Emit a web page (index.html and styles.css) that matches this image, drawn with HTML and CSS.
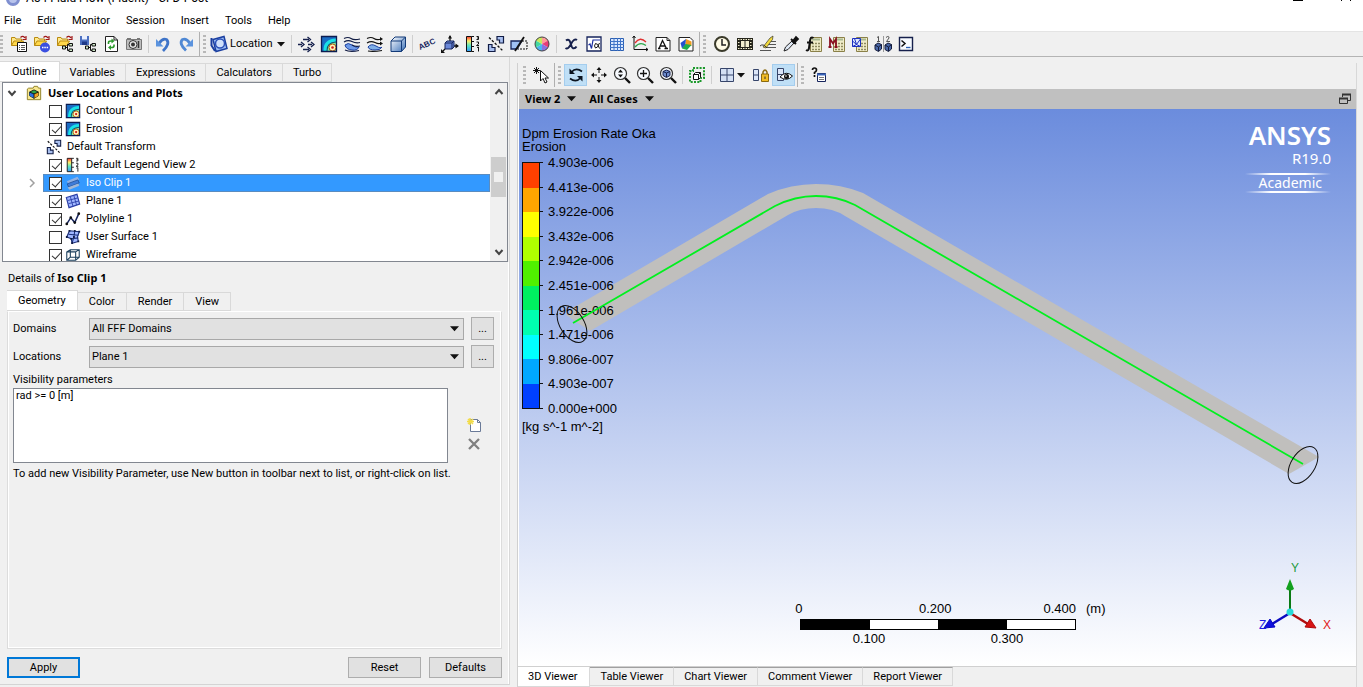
FILE: index.html
```html
<!DOCTYPE html>
<html lang="en">
<head>
<meta charset="utf-8">
<title>A54 Fluid Flow (Fluent) - CFD-Post</title>
<link rel="stylesheet" href="styles.css">
</head>
<body>
<svg class="defs" aria-hidden="true">
  <defs>
    <linearGradient id="rainbow" x1="0" y1="0" x2="0" y2="1">
      <stop offset="0" stop-color="#f33"/><stop offset=".3" stop-color="#fe6"/><stop offset=".6" stop-color="#5ee6c0"/><stop offset="1" stop-color="#39f"/>
    </linearGradient>
    <linearGradient id="glass" x1="0" y1="0" x2="1" y2="1">
      <stop offset="0" stop-color="#fff"/><stop offset="1" stop-color="#3a70b8"/>
    </linearGradient>
    <symbol id="folder" viewBox="0 0 18 18">
      <path d="M1.500 10.500V2.500H5L6 4H11.500V6" fill="#ffe98a" stroke="#b98a10"/>
      <path d="M1.500 10.500L4 6H13.500L11 10.500Z" fill="#ffd84a" stroke="#b98a10"/>
      <path d="M10.500 2.500Q13 0 15 3M16 1V4.500H12.500" fill="none" stroke="#a01818" stroke-width="1.200"/>
    </symbol>
    <symbol id="tree-nodes" viewBox="0 0 18 18">
      <path d="M9 12.500H11.500M11.500 9.500V15.500M11.500 9.500H14M11.500 15.500H14" fill="none" stroke="#111"/>
      <path d="M6.500 11H9.500V14H6.500ZM13 8.500H16.500V11H13ZM13 14H16.500V16.500H13Z" fill="#cfe8c8" stroke="#111"/>
    </symbol>
    <symbol id="i-load-results" viewBox="0 0 18 18"><use href="#folder"/><path d="M7.500 7.500H16.500V16.500H7.500Z" fill="#fff" stroke="#111"/><path d="M9 10.500H10M11 10.500H15M9 12.500H10M11 12.500H15M9 14.500H10M11 14.500H15" stroke="#555"/></symbol>
    <symbol id="i-load-state" viewBox="0 0 18 18"><use href="#folder"/><circle cx="12" cy="12.500" r="5" fill="#3a4fe0"/><path d="M9 12.500h1.500M11.300 12.500h1.500M13.600 12.500h1.500" stroke="#fff" stroke-width="1.500"/></symbol>
    <symbol id="i-open" viewBox="0 0 18 18"><use href="#folder"/><use href="#tree-nodes"/></symbol>
    <symbol id="i-save" viewBox="0 0 18 18"><path d="M1 1H10V10H1Z" fill="#4b6fc0"/><path d="M3 1H8V4.500H3Z" fill="#e9f0ff"/><path d="M3 6.500H8V10H3Z" fill="#203a88"/><use href="#tree-nodes"/></symbol>
    <symbol id="i-refresh" viewBox="0 0 18 18"><path d="M3.500 1.500H12L15.500 5V16.500H3.500Z" fill="#fff" stroke="#222"/><path d="M12 1.500V5H15.500" fill="none" stroke="#222"/><path d="M6.500 9V7.500Q6.500 6 9 6H10M12 9.500V11Q12 12.500 9.500 12.500H8.500" fill="none" stroke="#2c9a2c" stroke-width="1.600"/><path d="M9.500 3.500L12.500 6L9.500 8.500ZM9 10L6 12.500L9 15Z" fill="#2c9a2c"/></symbol>
    <symbol id="i-camera" viewBox="0 0 18 18"><path d="M1.500 4.500H16.500V14.500H1.500Z" fill="#bdbdbd" stroke="#777"/><path d="M2 3H6V5H2ZM12 3H15V5H12Z" fill="#777"/><circle cx="8" cy="9.500" r="4" fill="#e6e6e6" stroke="#333"/><circle cx="8" cy="9.500" r="2" fill="#333"/><path d="M13.500 6V13" stroke="#333" stroke-width="1.500"/></symbol>
    <symbol id="i-undo" viewBox="0 0 18 18"><path d="M5 8.500Q8.500 3 12.500 4.500Q16.500 8.500 9 16" fill="none" stroke="#3f74c8" stroke-width="2.800"/><path d="M2 4V11.500H9.500Z" fill="#5b93de"/></symbol>
    <symbol id="i-redo" viewBox="0 0 18 18"><path d="M13 8.500Q9.500 3 5.500 4.500Q1.500 8.500 9 15.500" fill="none" stroke="#4f88d4" stroke-width="2.800"/><path d="M16 4V11.500H8.500Z" fill="#5b93de"/></symbol>
    <symbol id="i-location" viewBox="0 0 18 18"><path d="M3 4.500L14 1.500L17 13.500L6 16.500Z" fill="#9fc0f4" stroke="#1b3fa0" stroke-width="1.500"/><path d="M1.500 3V10.500L5 16" fill="none" stroke="#1b3fa0" stroke-width="2"/><circle cx="10" cy="8.500" r="4.500" fill="#cfe0fb" stroke="#2b50b8" stroke-width="1.500"/></symbol>
    <symbol id="i-vector" viewBox="0 0 18 18"><path d="M6 4.500H12M1 9.500H5M11 9.500H15M6 14.500H12" stroke="#16204c" stroke-width="1.500"/><path d="M10.500 2L13.500 4.500L10.500 7M4 7L7 9.500L4 12M14 7L17 9.500L14 12M10.500 12L13.500 14.500L10.500 17" fill="none" stroke="#16204c" stroke-width="1.300"/></symbol>
    <symbol id="i-contour" viewBox="0 0 18 18"><path d="M2 2H16V16H2Z" fill="#1a6cc4"/><path d="M3.500 16Q3 4 16 3.500V16Z" fill="#19e0e6"/><path d="M6.500 16Q6 7 16 6.500V16Z" fill="#14506e"/><path d="M7.500 16Q7 8 16 7.500V16Z" fill="#7be8a0"/><circle cx="12.500" cy="12.500" r="3.500" fill="#fff4b8" stroke="#b05a10"/><circle cx="12.500" cy="12.500" r="1.300" fill="#d01818"/><path d="M1.500 1.500H16.500V16.500H1.500Z" fill="none" stroke="#0c1c50" stroke-width="1.300"/></symbol>
    <symbol id="i-stream" viewBox="0 0 18 18"><path d="M2 10Q5 7 9 10T16 12Q14 16 9 15Q3 14.500 2 10Z" fill="#6f9be8" stroke="#1b3fa0"/><path d="M1 3.500Q5 1.500 8 3.500T17 4M1 7Q5 4.500 9 6.500T17 7.500M9 10Q12 12 17 11M2 15Q7 17.500 16 15.500" fill="none" stroke="#111c44" stroke-width="1.200"/></symbol>
    <symbol id="i-track" viewBox="0 0 18 18"><path d="M2 12Q5 8 10 11T16 12Q14 15.500 9 15Q3 15 2 12Z" fill="#7fb0e8" stroke="#1b3fa0"/><path d="M1 3.500Q5 1.500 8 3.500T15 4M1 8Q5 5.500 9 7.500T15 8M2 16Q7 17 16 15.500" fill="none" stroke="#111" stroke-width="1.200"/><path d="M14 2L17 4L14 6ZM14 6.500L17 8.500L14 10.500Z" fill="#111"/></symbol>
    <symbol id="i-volume" viewBox="0 0 18 18"><path d="M2 6L6 2H16.500V12L12.500 16.500H2Z" fill="url(#glass)" stroke="#123a78"/><path d="M2 6H12.500V16.500M12.500 6L16.500 2" fill="none" stroke="#123a78"/></symbol>
    <symbol id="i-axes" viewBox="0 0 18 18"><path d="M9 1V6M13 11H17M4 14L1 17" stroke="#111" stroke-width="1.300"/><path d="M7 3.500L9 0L11 3.500ZM14.500 8.500L18 11L14.500 13.500ZM0 14V18H4Z" fill="#111"/><path d="M4 8L6 6H13V12L11 14H4Z" fill="#6b88d8" stroke="#16245c"/><path d="M4 8H11V14M11 8L13 6" fill="none" stroke="#16245c"/></symbol>
    <symbol id="i-legend" viewBox="0 0 18 18"><path d="M2.500 1.500H7.500V16.500H2.500Z" fill="url(#rainbow)" stroke="#111"/><path d="M7.500 1.500H10M7.500 6.500H10M7.500 11.500H10M7.500 16.500H10" stroke="#111"/><path d="M12.500 1.500H14.500V4.500H12.500M14.500 3H13M12.500 7H14.500V9L12.500 10.500H15M13 12.500L14.500 12V16.500" fill="none" stroke="#111"/></symbol>
    <symbol id="i-transform" viewBox="0 0 18 18"><path d="M10 1.500H16.500V8H12.500V5H10ZM1.500 9.500H5V12.500H8V16.500H1.500Z" fill="#a9c0f0" stroke="#111c44" stroke-width="1.200"/><path d="M2 2.500L16 16" stroke="#111" stroke-width="1.300" stroke-dasharray="2.500 1.500"/></symbol>
    <symbol id="i-clip" viewBox="0 0 18 18"><path d="M1 6H12L7 14H1Z" fill="#9fc0f4" stroke="#16245c" stroke-width="1.300"/><path d="M12 6H17V14H8" fill="none" stroke="#111" stroke-dasharray="2 1"/><path d="M14 2L5 16" stroke="#111" stroke-width="1.800"/></symbol>
    <symbol id="i-wheel" viewBox="0 0 18 18"><path d="M9 9V2A7 7 0 0 1 15 5.500Z" fill="#ff9a9a"/><path d="M9 9L15 5.500A7 7 0 0 1 15 12.500Z" fill="#e83c78"/><path d="M9 9L15 12.500A7 7 0 0 1 9 16Z" fill="#8b6fe0"/><path d="M9 9V16A7 7 0 0 1 3 12.500Z" fill="#4bb4f0"/><path d="M9 9L3 12.500A7 7 0 0 1 3 5.500Z" fill="#42d8a0"/><path d="M9 9L3 5.500A7 7 0 0 1 9 2Z" fill="#c8e85a"/><circle cx="9" cy="9" r="7" fill="none" stroke="#444"/></symbol>
    <symbol id="i-var" viewBox="0 0 18 18"><path d="M4 5.500Q7 3 8.500 8T10.500 13Q13 14 14.500 11.500M15 5Q12 3 9 9T3.500 13" fill="none" stroke="#16204c" stroke-width="2"/></symbol>
    <symbol id="i-expr" viewBox="0 0 18 18"><path d="M2 2H16V16H2Z" fill="#fff" stroke="#16245c" stroke-width="1.300"/><path d="M3.500 10L5 9L6.500 13.500L8 5H15" fill="none" stroke="#1b2fa0" stroke-width="1.200"/><path d="M14.500 8Q12.500 13.500 10.500 13Q8.500 11 10.500 8.500Q13 8 14.500 13.500" fill="none" stroke="#111"/></symbol>
    <symbol id="i-table" viewBox="0 0 18 18"><path d="M2.500 3.500H15.500V15.500H2.500Z" fill="#d9e8ff" stroke="#2c5fb0"/><path d="M2 6.500H16M2 9.500H16M2 12.500H16M6 3V16M9.500 3V16M12.500 3V16" stroke="#3f74c8"/></symbol>
    <symbol id="i-chart" viewBox="0 0 18 18"><path d="M3 1V14.500H17M1.500 3L3 1L4.500 3M15 13L17 14.500L15 16" fill="none" stroke="#111"/><path d="M4 8Q9 1 15 7" fill="none" stroke="#e03030" stroke-width="1.300"/><path d="M4 12Q9 6 15 10.500" fill="none" stroke="#2ca84c" stroke-width="1.300"/></symbol>
    <symbol id="i-comment" viewBox="0 0 18 18"><path d="M2 2.500H13L16 5.500V16H2Z" fill="#fff" stroke="#222"/><path d="M13 2.500V5.500H16" fill="none" stroke="#222"/><path d="M5 13.500L8.500 5.500L12.500 13.500M6.500 11H11M4 13.500H6.500M10.500 13.500H14" fill="none" stroke="#111" stroke-width="1.300"/></symbol>
    <symbol id="i-figure" viewBox="0 0 18 18"><path d="M2 2.500H13L16 5.500V16H2Z" fill="#fff" stroke="#222"/><path d="M3.500 8L9 4L8.500 10L5 13.500Z" fill="#2450d0"/><path d="M9 4L14.500 6.500V11L8.500 10Z" fill="#f09a1e"/><path d="M5 13.500L8.500 9L14.500 10L10 15Z" fill="#1fae4c"/></symbol>
    <symbol id="i-clock" viewBox="0 0 18 18"><circle cx="9" cy="9" r="7" fill="#fffbe6" stroke="#3a3a2a" stroke-width="2"/><path d="M9 4V10H13" fill="none" stroke="#222" stroke-width="1.500"/></symbol>
    <symbol id="i-film" viewBox="0 0 18 18"><path d="M1 3H17V15H1Z" fill="#26261c"/><path d="M5 6H8.500V12H5ZM9.500 6H13V12H9.500Z" fill="#f4f0d0"/><path d="M2 4.500H17M2 13.500H17M2 7.500H4M2 10.500H4M14 7.500H16M14 10.500H16" stroke="#f4f0d0" stroke-dasharray="1.500 1"/></symbol>
    <symbol id="i-quick" viewBox="0 0 18 18"><path d="M9 6.500H17M8 9.500H17M8 12.500H17M1 15.500H12" stroke="#555"/><path d="M4 12L11 3L14 1L13.500 4.500L7 13Z" fill="#f0d83c" stroke="#3a3a2a" stroke-width=".7"/><path d="M1 11Q4 8 8 13" fill="none" stroke="#333"/></symbol>
    <symbol id="i-probe" viewBox="0 0 18 18"><path d="M2 16L3.500 12L10 6L12 8L6 14.500Z" fill="#dfe8f4" stroke="#222"/><path d="M9 4L14 9M10.500 6.500L14 2L16 4L12 8Z" fill="#111" stroke="#111" stroke-width="1.800"/></symbol>
    <symbol id="calc" viewBox="0 0 18 18"><path d="M5.500 2.500H16.500V16.500H5.500Z" fill="#f0ecc8" stroke="#8a8048"/><path d="M7 4.500H15" stroke="#a8b890" stroke-width="2"/><path d="M7 8.500H15.500M7 11.500H15.500M7 14.500H15.500" stroke="#8e8a60" stroke-width="1.500" stroke-dasharray="2 1"/></symbol>
    <symbol id="i-func" viewBox="0 0 18 18"><use href="#calc"/><path d="M8.500 3Q5.500 1 5 6L4 13Q3.500 16.500 1 15M2 7.500H8" fill="none" stroke="#111" stroke-width="2"/></symbol>
    <symbol id="i-macro" viewBox="0 0 18 18"><use href="#calc"/><path d="M2 12V4L5 8.500L8 4V12M.5 12H3.500M6.500 12H9.500" fill="none" stroke="#8a1020" stroke-width="1.800"/></symbol>
    <symbol id="i-mesh" viewBox="0 0 18 18"><use href="#calc"/><path d="M1.500 3.500H9.500V11.500H1.500Z" fill="#dfe8ff" stroke="#1b2fc0"/><path d="M1.500 6L5.500 9.500L9.500 4M1.500 11.500L5.500 9.500L9.500 11.500M3.500 3.500L5.500 9.500" fill="none" stroke="#1b2fc0"/></symbol>
    <symbol id="i-compare" viewBox="0 0 18 18"><path d="M3 2.500L4.500 1.500V6.500M3 6.500H6M12 2.500Q15 0 15 3L12.500 6.500H16" fill="none" stroke="#555"/><path d="M9.500 1V17" stroke="#999"/><path d="M1 10L4 8L7.500 9.500V14L4.500 16.500L1 14.500ZM11 10L14 8L17.500 9.500V14L14.500 16.500L11 14.500Z" fill="#4a68a8" stroke="#141c3c"/><path d="M1 10L4.500 12L7.500 9.500M4.500 12V16M11 10L14.500 12L17.500 9.500M14.500 12V16" fill="none" stroke="#141c3c"/></symbol>
    <symbol id="i-command" viewBox="0 0 18 18"><path d="M2.500 2.500H15.500V15.500H2.500Z" fill="#f8fbff" stroke="#16204c" stroke-width="1.400"/><path d="M4.500 5.500L8 8.500L4.500 11.500" fill="none" stroke="#111" stroke-width="1.500"/><path d="M9 12.500H13.500" stroke="#2c5fb0" stroke-width="1.300"/></symbol>
    <symbol id="i-select" viewBox="0 0 18 18"><path d="M4.500 1V8M1 4.500H8M2 2L7 7M7 2L2 7" stroke="#111"/><path d="M8.500 4.500V15L11 12.500L13 17L15 16L13 12H16.500Z" fill="#fff" stroke="#111"/></symbol>
    <symbol id="i-rotate" viewBox="0 0 18 18"><path d="M4.500 6Q9 1 15 5.500M13.500 12Q9 17 3 12.500" fill="none" stroke="#0b1420" stroke-width="1.800"/><path d="M2.500 2.500V8H8ZM15.500 10V15.500L10 10Z" fill="#0b1420"/></symbol>
    <symbol id="i-pan" viewBox="0 0 18 18"><path d="M9 2V7M9 11V16M2 9H7M11 9H16" stroke="#111"/><path d="M6.500 4L9 1L11.500 4ZM6.500 14L9 17L11.500 14ZM4 6.500L1 9L4 11.500ZM14 6.500L17 9L14 11.500Z" fill="#111"/></symbol>
    <symbol id="lens" viewBox="0 0 18 18"><circle cx="7.500" cy="7.500" r="6" fill="#f8fbff" stroke="#333" stroke-width="1.200"/><path d="M12 12L17 17" stroke="#111" stroke-width="2.400"/></symbol>
    <symbol id="i-zoom" viewBox="0 0 18 18"><use href="#lens"/><path d="M5 6.500L7.500 3.500L10 6.500ZM5 8.500L7.500 11.500L10 8.500Z" fill="#111"/></symbol>
    <symbol id="i-zoom-box" viewBox="0 0 18 18"><use href="#lens"/><path d="M4 7.500H11M7.500 4V11" stroke="#111" stroke-width="1.300"/></symbol>
    <symbol id="i-fit" viewBox="0 0 18 18"><use href="#lens"/><path d="M4 5.500L7.500 4L11 5.500V9.500L7.500 11.500L4 9.500Z" fill="#6f8ed0" stroke="#16204c"/><path d="M4 5.500L7.500 7L11 5.500M7.500 7V11" fill="none" stroke="#16204c"/></symbol>
    <symbol id="i-highlight" viewBox="0 0 18 18"><path d="M5 2H16V12H12.500V16H2V5H5Z" fill="none" stroke="#1c9a2c" stroke-width="2" stroke-dasharray="2 1.300"/><path d="M5.500 8.500L7.500 6.500H12.500V11.500L10.500 13.500H5.500ZM5.500 8.500H10.500V13.500M10.500 8.500L12.500 6.500" fill="#fff" stroke="#111"/></symbol>
    <symbol id="i-views" viewBox="0 0 18 18"><path d="M2.500 2.500H15.500V15.500H2.500Z" fill="#d4e0f4" stroke="#36456a"/><path d="M2 9H16M9 2V16" stroke="#36456a"/></symbol>
    <symbol id="i-lock" viewBox="0 0 18 18"><path d="M1.500 3.500H6.500V14.500H1.500ZM1.500 9H6.500" fill="#dce6f8" stroke="#36456a"/><path d="M11 8V6Q13 2 15 6V8" fill="none" stroke="#8a6a10" stroke-width="1.500"/><path d="M9.500 8H16.500V15.500H9.500Z" fill="#f2bc24" stroke="#8a6a10"/><path d="M13 10.500V13" stroke="#333"/></symbol>
    <symbol id="i-eye" viewBox="0 0 18 18"><path d="M2.500 2.500H8.500V14.500H2.500ZM2.500 8.500H8.500" fill="#dce6f8" stroke="#36456a"/><path d="M5 11Q11 4 17.500 10Q12 16 5 11Z" fill="#fff" stroke="#111"/><circle cx="11.500" cy="10.500" r="2.500" fill="#111"/><circle cx="11" cy="10" r=".8" fill="#fff"/></symbol>
    <symbol id="i-help" viewBox="0 0 18 18"><path d="M2.500 4Q2.500 2 4.500 2T6.500 4Q6.500 5.500 4.500 6.500V8M4.500 9V11" fill="none" stroke="#111" stroke-width="1.700"/><path d="M7.500 7.500H15.500V15.500H7.500Z" fill="#fff" stroke="#16245c"/><path d="M7 8.500H16" stroke="#3a64b8" stroke-width="2"/><path d="M9 11.500H14M9 13.500H14" stroke="#777"/></symbol>
    <symbol id="i-group" viewBox="0 0 18 18"><path d="M1.500 4.500V16.500H16.500V3.500H14L13 1.500H9L8 3.500H3Z" fill="#f8e890" stroke="#8a7a20"/><path d="M4 8L9 5.500L14 8V12L9 15L4 12Z" fill="#2ca84c" stroke="#111"/><path d="M4 8L9 10V15L4 12Z" fill="#2a6fe0"/><path d="M9 10L14 8V12L9 15Z" fill="#f0a01e"/><path d="M4 8L9 10L14 8M9 10V15" fill="none" stroke="#111"/></symbol>
    <symbol id="i-iso" viewBox="0 0 18 18"><path d="M2 7L14 2L16 5L4 10Z" fill="#8fb0e4"/><path d="M2.500 10L14.500 5.500L16 9L4 13.500Z" fill="#3f7cd8" stroke="#24539c"/><path d="M3 14L15 9.500L16 12L5 16.500Z" fill="#a4b8d4"/></symbol>
    <symbol id="i-plane" viewBox="0 0 18 18"><path d="M1.500 5L13.500 1.500L16.500 12.500L4.500 16.500Z" fill="#9fb6ff" stroke="#2b3fa8" stroke-width="1.300"/><path d="M6 4L9 15M10 3L13 13.500M3 8.500L14.500 5.500M4 12L15.500 9" stroke="#2b3fa8"/></symbol>
    <symbol id="i-polyline" viewBox="0 0 18 18"><path d="M2 14.500L6.500 7.500L11 13L15.500 3" fill="none" stroke="#16245c" stroke-width="1.700"/><circle cx="2" cy="14.500" r="1.500" fill="#111"/><circle cx="6.500" cy="7.500" r="1.500" fill="#111"/><circle cx="11" cy="13" r="1.500" fill="#111"/><circle cx="15.500" cy="3" r="1.500" fill="#111"/></symbol>
    <symbol id="i-surface" viewBox="0 0 18 18"><path d="M5 2L16 3L14 9L15 14L8 16L7 11L2 9Z" fill="#9fb6ff" stroke="#1b2f78" stroke-width="1.300"/><path d="M11 2L10 9L8 16M4 6L15 7M7 11L15 10" fill="none" stroke="#1b2f78" stroke-width="1.200"/><path d="M4 1H6V3H4ZM10 1H12V3H10ZM15 2H17V4H15ZM1 8H3V10H1ZM6 10H8V12H6ZM7 15H9V17H7ZM14 13H16V15H14ZM9 8H11V10H9Z" fill="#111c44"/></symbol>
    <symbol id="i-wire" viewBox="0 0 18 18"><path d="M2 5.500L6 3H16V11.500L12 15H2ZM2 5.500H12V15M12 5.500L16 3M6 3V11.500H16M6 11.500L2 15" fill="none" stroke="#1b3f5c" stroke-width="1.200"/></symbol>
    <symbol id="arrow" viewBox="0 0 10 6"><path d="M0 0H10L5 5.500Z" fill="#111"/></symbol>
    <symbol id="up" viewBox="0 0 10 10"><path d="M1.500 7L5 3L8.500 7" fill="none" stroke="#444" stroke-width="2"/></symbol>
    <symbol id="down" viewBox="0 0 10 10"><path d="M1.500 3L5 7L8.500 3" fill="none" stroke="#444" stroke-width="2"/></symbol>
  </defs>
</svg>

<div class="app">
  <header class="titlebar">
    <svg class="app-icon" viewBox="0 0 14 14"><circle cx="7" cy="7" r="7" fill="#7f8fd0"/><circle cx="7" cy="7" r="4" fill="#b9c4ec"/></svg>
    <span class="title-text">A54 Fluid Flow (Fluent) - CFD-Post</span>
    <span class="window-controls"><i class="minimize"></i><i class="close"></i></span>
  </header>

  <nav class="menubar">
    <button>File</button><button>Edit</button><button>Monitor</button><button>Session</button><button>Insert</button><button>Tools</button><button>Help</button>
  </nav>

  <div class="toolbar main-toolbar">
    <span class="grip"></span>
    <button class="tool" aria-label="Load results"><svg><use href="#i-load-results"/></svg></button>
    <button class="tool" aria-label="Load state"><svg><use href="#i-load-state"/></svg></button>
    <button class="tool" aria-label="Open"><svg><use href="#i-open"/></svg></button>
    <button class="tool" aria-label="Save state"><svg><use href="#i-save"/></svg></button>
    <button class="tool" aria-label="Refresh"><svg><use href="#i-refresh"/></svg></button>
    <button class="tool" aria-label="Save picture"><svg><use href="#i-camera"/></svg></button>
    <span class="sep"></span>
    <button class="tool" aria-label="Undo"><svg><use href="#i-undo"/></svg></button>
    <button class="tool" aria-label="Redo"><svg><use href="#i-redo"/></svg></button>
    <span class="sep edge"></span><span class="grip"></span>
    <button class="tool location"><svg><use href="#i-location"/></svg>Location<svg class="arrow"><use href="#arrow"/></svg></button>
    <span class="sep"></span>
    <button class="tool" aria-label="Vector"><svg><use href="#i-vector"/></svg></button>
    <button class="tool" aria-label="Contour"><svg><use href="#i-contour"/></svg></button>
    <button class="tool" aria-label="Streamline"><svg><use href="#i-stream"/></svg></button>
    <button class="tool" aria-label="Particle track"><svg><use href="#i-track"/></svg></button>
    <button class="tool" aria-label="Volume rendering"><svg><use href="#i-volume"/></svg></button>
    <span class="sep"></span>
    <button class="tool" aria-label="Text"><svg viewBox="0 0 18 18"><text x="1" y="14" class="abc" transform="rotate(-24 4 12)">ABC</text></svg></button>
    <button class="tool" aria-label="Coordinate frame"><svg><use href="#i-axes"/></svg></button>
    <button class="tool" aria-label="Legend"><svg><use href="#i-legend"/></svg></button>
    <button class="tool" aria-label="Instance transform"><svg><use href="#i-transform"/></svg></button>
    <button class="tool" aria-label="Clip plane"><svg><use href="#i-clip"/></svg></button>
    <button class="tool" aria-label="Color map"><svg><use href="#i-wheel"/></svg></button>
    <span class="sep"></span>
    <button class="tool" aria-label="Variable"><svg><use href="#i-var"/></svg></button>
    <button class="tool" aria-label="Expression"><svg><use href="#i-expr"/></svg></button>
    <button class="tool" aria-label="Table"><svg><use href="#i-table"/></svg></button>
    <button class="tool" aria-label="Chart"><svg><use href="#i-chart"/></svg></button>
    <button class="tool" aria-label="Comment"><svg><use href="#i-comment"/></svg></button>
    <button class="tool" aria-label="Figure"><svg><use href="#i-figure"/></svg></button>
    <span class="sep edge"></span><span class="grip"></span>
    <button class="tool" aria-label="Timestep selector"><svg><use href="#i-clock"/></svg></button>
    <button class="tool" aria-label="Animation"><svg><use href="#i-film"/></svg></button>
    <button class="tool" aria-label="Quick editor"><svg><use href="#i-quick"/></svg></button>
    <button class="tool" aria-label="Probe"><svg><use href="#i-probe"/></svg></button>
    <button class="tool" aria-label="Function calculator"><svg><use href="#i-func"/></svg></button>
    <button class="tool" aria-label="Macro calculator"><svg><use href="#i-macro"/></svg></button>
    <button class="tool" aria-label="Mesh calculator"><svg><use href="#i-mesh"/></svg></button>
    <button class="tool" aria-label="Case comparison"><svg><use href="#i-compare"/></svg></button>
    <button class="tool" aria-label="Command editor"><svg><use href="#i-command"/></svg></button>
  </div>

  <main class="workspace">
    <section class="left">
      <div class="tabs outline-tabs" role="tablist">
        <button class="tab active" role="tab">Outline</button><button class="tab" role="tab">Variables</button><button class="tab" role="tab">Expressions</button><button class="tab" role="tab">Calculators</button><button class="tab" role="tab">Turbo</button>
      </div>
      <div class="tree-box">
        <ul class="tree">
          <li class="row root"><svg class="chev"><use href="#down"/></svg><svg class="ico"><use href="#i-group"/></svg><b>User Locations and Plots</b></li>
          <li class="row"><label><input type="checkbox"><svg class="ico"><use href="#i-contour"/></svg>Contour 1</label></li>
          <li class="row"><label><input type="checkbox" checked><svg class="ico"><use href="#i-contour"/></svg>Erosion</label></li>
          <li class="row"><span class="plain"><svg class="ico"><use href="#i-transform"/></svg>Default Transform</span></li>
          <li class="row"><label><input type="checkbox" checked><svg class="ico"><use href="#i-legend"/></svg>Default Legend View 2</label></li>
          <li class="row selected"><svg class="expander" viewBox="0 0 10 10"><path d="M3 1L7 5L3 9" fill="none" stroke="#a0a0a0" stroke-width="1.500"/></svg><label><input type="checkbox" checked><svg class="ico"><use href="#i-iso"/></svg>Iso Clip 1</label></li>
          <li class="row"><label><input type="checkbox" checked><svg class="ico"><use href="#i-plane"/></svg>Plane 1</label></li>
          <li class="row"><label><input type="checkbox" checked><svg class="ico"><use href="#i-polyline"/></svg>Polyline 1</label></li>
          <li class="row"><label><input type="checkbox"><svg class="ico"><use href="#i-surface"/></svg>User Surface 1</label></li>
          <li class="row"><label><input type="checkbox" checked><svg class="ico"><use href="#i-wire"/></svg>Wireframe</label></li>
        </ul>
        <div class="scrollbar"><svg><use href="#up"/></svg><div class="thumb"></div><svg><use href="#down"/></svg></div>
      </div>

      <div class="details">
        <h2>Details of <b>Iso Clip 1</b></h2>
        <div class="tabs detail-tabs" role="tablist">
          <button class="tab active" role="tab">Geometry</button><button class="tab" role="tab">Color</button><button class="tab" role="tab">Render</button><button class="tab" role="tab">View</button>
        </div>
        <div class="panel">
          <div class="field"><label for="domains">Domains</label><span class="combo"><select id="domains"><option>All FFF Domains</option></select><svg><use href="#arrow"/></svg></span><button class="more">...</button></div>
          <div class="field"><label for="locations">Locations</label><span class="combo"><select id="locations"><option>Plane 1</option></select><svg><use href="#arrow"/></svg></span><button class="more">...</button></div>
          <label class="vis-label" for="params">Visibility parameters</label>
          <div class="params">
            <select id="params" size="4"><option>rad &gt;= 0 [m]</option></select>
            <div class="param-tools">
              <button aria-label="New"><svg viewBox="0 0 16 16"><path d="M4.500 2.500H11.500L14.500 5.500V14.500H4.500Z" fill="#fff" stroke="#6a7a98"/><path d="M11.500 2.500V5.500H14.500" fill="none" stroke="#6a7a98"/><path d="M4 1V8M1 4.500H8M2 2L7 7M7 2L2 7" stroke="#f2dc4a" stroke-width="1.500"/></svg></button>
              <button aria-label="Delete"><svg viewBox="0 0 16 16"><path d="M3 3L13 13M13 3L3 13" stroke="#808080" stroke-width="2.300"/></svg></button>
            </div>
          </div>
          <p>To add new Visibility Parameter, use New button in toolbar next to list, or right-click on list.</p>
        </div>
        <div class="actions"><button class="push default">Apply</button><span class="spacer"></span><button class="push">Reset</button><button class="push">Defaults</button></div>
      </div>
    </section>

    <section class="right">
      <div class="toolbar view-toolbar">
        <span class="grip"></span>
        <button class="tool" aria-label="Select"><svg><use href="#i-select"/></svg></button>
        <span class="sep edge"></span><span class="grip"></span>
        <button class="tool on" aria-label="Rotate"><svg><use href="#i-rotate"/></svg></button>
        <button class="tool" aria-label="Pan"><svg><use href="#i-pan"/></svg></button>
        <button class="tool" aria-label="Zoom"><svg><use href="#i-zoom"/></svg></button>
        <button class="tool" aria-label="Zoom box"><svg><use href="#i-zoom-box"/></svg></button>
        <button class="tool" aria-label="Fit view"><svg><use href="#i-fit"/></svg></button>
        <span class="sep"></span>
        <button class="tool" aria-label="Highlighting"><svg><use href="#i-highlight"/></svg></button>
        <span class="sep"></span>
        <button class="tool views" aria-label="Viewports"><svg><use href="#i-views"/></svg><svg class="arrow"><use href="#arrow"/></svg></button>
        <button class="tool" aria-label="Lock views"><svg><use href="#i-lock"/></svg></button>
        <button class="tool on" aria-label="Sync visibility"><svg><use href="#i-eye"/></svg></button>
        <span class="sep edge"></span><span class="grip"></span>
        <button class="tool" aria-label="Help"><svg><use href="#i-help"/></svg></button>
      </div>
      <div class="view-head">
        <button>View 2<svg><use href="#arrow"/></svg></button><button>All Cases<svg><use href="#arrow"/></svg></button>
        <button class="restore" aria-label="Restore"><svg viewBox="0 0 14 12"><path d="M4.500 4V1.500H12.500V7.500H10" fill="none" stroke="#333"/><path d="M4 1.500H13" stroke="#333" stroke-width="2"/><path d="M1.500 5.500H9.500V10.500H1.500Z" fill="#c0c0c0" stroke="#333"/><path d="M1 5.500H10" stroke="#333" stroke-width="2"/></svg></button>
      </div>
      <div class="viewport">
        <svg class="scene" viewBox="0 0 837 557">
          <path d="M47 206L54 199L249 85Q272 75 297 75Q322 75 344 84L800 348L770 365L326 107Q314 99 297 99Q281 99 269 106L71 222Z" fill="#c0bfbd"/>
        </svg>
        <div class="legend">
          <div class="legend-title">Dpm Erosion Rate Oka<br>Erosion</div>
          <div class="scale">
            <div class="bands"><i class="c1"></i><i class="c2"></i><i class="c3"></i><i class="c4"></i><i class="c5"></i><i class="c6"></i><i class="c7"></i><i class="c8"></i><i class="c9"></i><i class="c10"></i></div>
            <ol><li>4.903e-006</li><li>4.413e-006</li><li>3.922e-006</li><li>3.432e-006</li><li>2.942e-006</li><li>2.451e-006</li><li>1.961e-006</li><li>1.471e-006</li><li>9.806e-007</li><li>4.903e-007</li><li>0.000e+000</li></ol>
          </div>
          <div class="unit">[kg s^-1 m^-2]</div>
        </div>
        <svg class="scene" viewBox="0 0 837 557">
          <path d="M54 214L256 97Q276 87 297 87Q318 87 336 96L784 355" fill="none" stroke="#00f01e" stroke-width="1.800"/>
          <ellipse cx="53" cy="215" rx="20.500" ry="12" transform="rotate(58 53 215)" fill="none" stroke="#111"/>
          <ellipse cx="784" cy="356" rx="20.500" ry="12" transform="rotate(-58 784 356)" fill="none" stroke="#111"/>
        </svg>
        <div class="brand"><strong>ANSYS</strong><span>R19.0</span><em>Academic</em></div>
        <div class="ruler">
          <div class="marks top"><span>0</span><span>0.200</span><span>0.400</span></div>
          <div class="bar"><i></i><i></i><i></i><i></i></div>
          <div class="marks bottom"><span>0.100</span><span>0.300</span></div>
          <span class="meters">(m)</span>
        </div>
        <svg class="triad" viewBox="0 0 80 80">
          <path d="M35 52V27" stroke="#0a7a14" stroke-width="2"/><path d="M31 28L35 18L39 28Q35 31 31 28Z" fill="#12a01e"/>
          <path d="M35 52L53 63" stroke="#b00c0c" stroke-width="2.500"/><path d="M55 58L61 67L50 66Z" fill="#d81414" stroke="#b00c0c"/>
          <path d="M35 52L17 63" stroke="#0a0ac0" stroke-width="2.500"/><path d="M15 58L9 67L20 66Z" fill="#1010e0" stroke="#0a0ac0"/>
          <circle cx="35" cy="51" r="3.500" fill="#28d8d8"/>
          <text x="36" y="11" fill="#1e9a3c">Y</text><text x="68" y="68" fill="#e02020">X</text><text x="4" y="68" fill="#1a1ae0">Z</text>
        </svg>
      </div>
      <div class="tabs viewer-tabs" role="tablist">
        <button class="tab active" role="tab">3D Viewer</button><button class="tab" role="tab">Table Viewer</button><button class="tab" role="tab">Chart Viewer</button><button class="tab" role="tab">Comment Viewer</button><button class="tab" role="tab">Report Viewer</button>
      </div>
    </section>
  </main>
</div>
</body>
</html>
```
FILE: styles.css
```css
* { box-sizing: border-box; }
body { margin: 0; background: #f0f0f0; color: #000; font: 11px/14px Roboto, "Noto Sans", sans-serif; }
button, select, input { font: inherit; color: inherit; margin: 0; }
button { background: none; border: 0; padding: 0; white-space: nowrap; }
b { font-family: "Noto Sans", "Open Sans", sans-serif; }
ul, ol { list-style: none; margin: 0; padding: 0; }
svg { display: block; flex: none; }
.defs { position: absolute; width: 0; height: 0; }

.app { display: flex; flex-direction: column; height: 100vh; overflow: hidden; }

.titlebar { height: 10px; flex: none; background: #fff; overflow: hidden; display: flex; align-items: flex-end; padding: 0 12px 4px 6px; }
.app-icon { width: 14px; height: 14px; }
.title-text { margin-left: 6px; flex: 1; font-size: 12px; line-height: 16px; }
.window-controls { display: flex; gap: 38px; align-self: flex-start; }
.minimize { width: 10px; height: 1px; background: #000; }
.close { width: 10px; height: 1px; border: 0 solid #000; border-width: 0 1px; }

.menubar { height: 21px; flex: none; background: #fff; display: flex; align-items: center; gap: 16px; padding: 1px 0 0 4px; }

.toolbar { display: flex; align-items: center; flex: none; }
.main-toolbar { height: 26px; border-top: 1px solid #e4e4e4; border-bottom: 1px solid #b4b4b4; }
.tool { width: 23px; height: 22px; flex: none; display: flex; align-items: center; justify-content: center; }
.tool svg { width: 18px; height: 18px; }
.tool .arrow { width: 8px; height: 5px; }
.tool.on { background: #bfdff6; border: 1px solid #a4cdee; }
.location { width: 78px; gap: 2px; justify-content: flex-start; padding-left: 0; }
.location .arrow { margin-left: 2px; }
.views { width: 35px; gap: 1px; }
.sep { width: 1px; height: 18px; margin: 0 2px 0 3px; background: #cfcfcf; flex: none; }
.edge { height: 24px; margin: 0 1px 0 2px; background: #b0b0b0; }
.grip { width: 3px; height: 18px; margin: 0 3px 0 2px; flex: none; background: repeating-linear-gradient(#b8b8b8 0 2px, transparent 2px 4px); }
.main-toolbar .grip { margin-right: 4px; }
.main-toolbar .grip:first-child { margin-left: 0; }
.abc { font: bold 8px "Liberation Sans", sans-serif; fill: #16245c; }

.workspace { flex: 1; min-height: 0; display: grid; grid-template-columns: 510fr 853fr; }
.left { display: flex; flex-direction: column; min-width: 0; min-height: 0; padding-top: 4px; border-right: 1px solid #d8d8d8; margin-bottom: 2px; border-bottom: 1px solid #d4d4d4; }

.tabs { display: flex; flex: none; }
.tab { border: 1px solid #d9d9d9; border-left: 0; background: #f0f0f0; height: 19px; padding: 0 11px; text-align: center; }
.tab.active { background: #fff; height: 21px; }
.outline-tabs, .detail-tabs { align-items: flex-end; }
.outline-tabs .tab { padding: 0 10px; }
.outline-tabs .active { padding: 0 12px; }

.tree-box { height: 180px; flex: none; margin: 0 1px 0 2px; background: #fff; border: 1px solid #828790; display: flex; overflow: hidden; }
.tree { flex: 1; padding-top: 1px; }
.row { height: 18px; display: flex; align-items: center; padding-left: 40px; position: relative; white-space: nowrap; line-height: 16px; }
.row label, .row .plain { flex: 1; height: 18px; display: flex; align-items: center; gap: 3px; padding-left: 6px; }
.row .plain { padding-left: 3px; gap: 5px; }
.row .ico { width: 16px; height: 16px; }
.row label .ico { margin-right: 2px; }
.root { padding-left: 4px; gap: 6px; }
.root .ico { margin-left: 3px; }
.chev { width: 10px; height: 10px; }
.row.selected label { background: #3399ff; color: #fff; border: 1px solid #5a8cc0; padding-left: 5px; }
.expander { position: absolute; left: 24px; width: 10px; height: 10px; }
input[type="checkbox"] { appearance: none; width: 13px; height: 13px; flex: none; border: 1px solid #333; background: #fff; display: block; }
input[type="checkbox"]:checked::after { content: ""; display: block; width: 4px; height: 8px; margin: 0 0 0 4px; border: solid #333; border-width: 0 1px 1px 0; transform: rotate(42deg); }
.scrollbar { width: 17px; background: #f0f0f0; display: flex; flex-direction: column; align-items: center; padding: 4px 0; }
.scrollbar svg { width: 10px; height: 10px; }
.scrollbar svg:last-child { margin-top: auto; }
.thumb { width: 15px; height: 40px; margin-top: 60px; background: #cdcdcd; padding: 15px 3px; }
.thumb::before { content: ""; display: block; height: 10px; background: #f0f0f0; }

.details { flex: 1; min-height: 0; display: flex; flex-direction: column; padding: 9px 6px 6px 7px; border-right: 1px solid #fff; }
h2 { font: inherit; margin: 0 0 4px 1px; }
.panel { flex: 1; border: 1px solid #dcdcdc; border-top-color: #fff; padding: 5px 7px 0 5px; box-shadow: inset 1px 0 #fff, inset -1px -1px #fff; }
.field { display: flex; align-items: center; height: 23px; margin-bottom: 5px; }
.field label { width: 76px; flex: none; }
.combo { flex: 1; position: relative; }
.combo select { appearance: none; width: 100%; height: 22px; padding: 0 4px 0 2px; border: 1px solid #a8a8a8; border-radius: 0; background: #e1e1e1; display: block; }
.combo svg { position: absolute; right: 5px; top: 8px; width: 9px; height: 6px; pointer-events: none; }
.more, .push { background: #e1e1e1; border: 1px solid #adadad; }
.more { width: 23px; height: 23px; margin-left: 7px; }
.vis-label { display: block; margin-bottom: 1px; }
.params { display: flex; }
.params select { flex: 1; height: 75px; padding: 0; border: 1px solid #828790; border-radius: 0; background: #fff; outline: 0; overflow: hidden; }
.params option { padding: 0 2px; min-height: 0; }
.param-tools { width: 46px; display: flex; flex-direction: column; align-items: center; padding: 29px 0 0 6px; gap: 3px; }
.param-tools svg { width: 16px; height: 16px; }
.panel p { margin: 4px 0 0; white-space: nowrap; }
.actions { display: flex; gap: 8px; margin-top: 8px; }
.spacer { flex: 1; }
.push { width: 73px; height: 21px; }
.push.default { border: 2px solid #0078d7; }

.right { display: flex; flex-direction: column; min-width: 0; margin: 6px 6px 0 7px; border-left: 1px solid #d0d0d0; border-right: 1px solid #d8d8d8; }
.view-toolbar { height: 26px; padding: 0 0 2px 3px; }
.view-head { height: 20px; flex: none; background: #c0c0c0; display: flex; align-items: center; font-family: "Noto Sans", "Open Sans", sans-serif; gap: 13px; padding: 0 4px 0 6px; border-left: 1px solid #fff; }
.view-head button { display: flex; align-items: center; gap: 7px; font-weight: bold; }
.view-head svg { width: 9px; height: 6px; }
.view-head .restore { margin-left: auto; }
.view-head .restore svg { width: 14px; height: 12px; }
.viewport { flex: 1; min-height: 0; position: relative; border-left: 1px solid #fff; background: linear-gradient(#6b8cdd, #fff); font: 13px/15px "Liberation Sans", Arial, sans-serif; }
.scene { position: absolute; inset: 0; width: 100%; height: 100%; }
.legend { position: absolute; left: 3px; top: 18px; }
.legend-title { line-height: 13px; padding-bottom: 9px; }
.scale { display: flex; }
.bands { width: 18px; height: 247px; border: 1px solid #111; display: flex; flex-direction: column; }
.bands i { flex: 1; }
.c1 { background: #ff4000; } .c2 { background: #ffa500; } .c3 { background: #ffff00; } .c4 { background: #b0ff00; } .c5 { background: #50f000; }
.c6 { background: #00f060; } .c7 { background: #00ffb0; } .c8 { background: #00ffff; } .c9 { background: #00a8ff; } .c10 { background: #0040ff; }
.scale ol { height: 261px; margin: -7px 0; display: flex; flex-direction: column; justify-content: space-between; }
.scale li { height: 15px; display: flex; align-items: center; line-height: 15px; }
.scale li::before { content: ""; width: 3px; height: 1px; margin-right: 5px; background: #111; }
.unit { margin-top: 10px; }
.brand { position: absolute; right: 25px; top: 12px; color: #fff; font-family: "Noto Sans", sans-serif; display: flex; flex-direction: column; align-items: flex-end; }
.brand strong { font-size: 26px; line-height: 28px; font-weight: 600; }
.brand span { font-size: 15px; line-height: 18px; }
.brand em { font-style: normal; font-size: 14px; line-height: 16px; margin-top: 6px; padding: 0 9px 0 14px; border: solid; border-width: 2px 0; border-image: linear-gradient(90deg, transparent, #fff 30%, #fff 70%, transparent) 2 0; }
.ruler { position: absolute; left: 281px; bottom: 20px; width: 276px; }
.marks { display: flex; }
.marks.top { margin: 0 0 3px -17px; }
.marks.top span { width: 34px; text-align: center; }
.marks.top span:nth-child(2) { margin-left: 104px; }
.marks.top span:nth-child(3) { margin-left: 92px; }
.marks.bottom { justify-content: space-around; }
.bar { height: 11px; border: 1px solid #000; display: flex; background: #fff; margin-bottom: 1px; }
.bar i { flex: 1; }
.bar i:nth-child(odd) { background: #000; }
.meters { position: absolute; left: 286px; top: 0; }
.triad { position: absolute; right: 21px; bottom: 25px; width: 80px; height: 80px; }
.triad text { font: 12px "Liberation Sans", sans-serif; }
.viewer-tabs { height: 21px; align-items: flex-start; border-top: 1px solid #d0d0d0; }
.viewer-tabs .tab { border-top-color: #a0a0a0; padding: 0 10px; }
.viewer-tabs .active { padding: 0 12px 0 10px; height: 20px; border-top: 0; }
```
